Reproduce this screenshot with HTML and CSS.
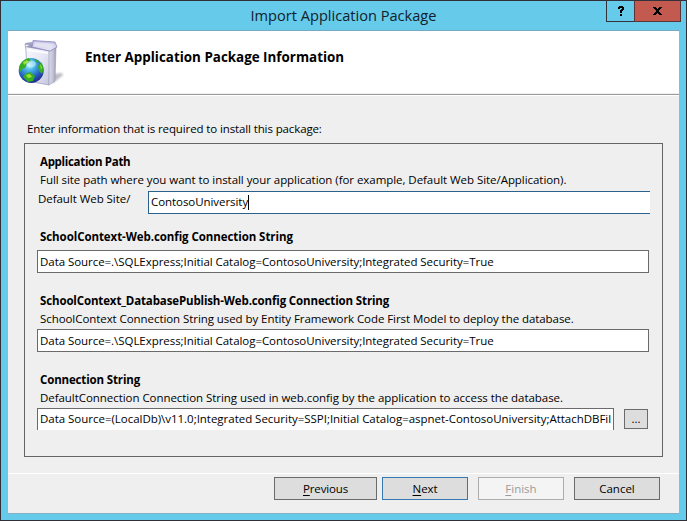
FILE: index.html
```
<!DOCTYPE html>
<html lang="en">
<head>
<meta charset="utf-8">
<title>Import Application Package</title>
<link rel="stylesheet" href="styles.css">
</head>
<body>
<div class="window">
  <div class="titlebar">
    <h1 class="title"><span class="t-title">Import Application Package</span></h1>
    <div class="controls">
      <button class="help" aria-label="Help"><svg width="8" height="11" viewBox="0 0 8 11"><path d="M1 3V1H2V0H6V1H7V4H6V5H5V7H3V4H4V3H5V2H3V3ZM3 8H5V10H3Z"/></svg></button>
      <button class="close" aria-label="Close"><svg width="9" height="8" viewBox="0 0 9 8"><path d="M0 0H3V1H4V2H5V1H6V0H9V1H8V2H7V3H6V5H7V6H8V7H9V8H6V7H5V6H4V7H3V8H0V7H1V6H2V5H3V3H2V2H1V1H0Z"/></svg></button>
    </div>
  </div>
  <div class="client">
    <header class="banner">
      <svg class="package" width="48" height="50" viewBox="0 0 48 50">
        <defs>
          <linearGradient id="front" x1="0" y1="0" x2="1" y2="1"><stop offset="0" stop-color="#f9f9fd"/><stop offset=".5" stop-color="#e7e8f5"/><stop offset="1" stop-color="#c4c5de"/></linearGradient>
          <linearGradient id="side"><stop offset="0" stop-color="#dcdcea"/><stop offset=".6" stop-color="#c0c0d4"/><stop offset="1" stop-color="#9a9ab4"/></linearGradient>
          <linearGradient id="flap" x1="0" y1="0" x2="0" y2="1"><stop offset="0" stop-color="#b9b7df"/><stop offset="1" stop-color="#eeeef8"/></linearGradient>
          <radialGradient id="globe" cx=".42" cy=".28" r=".75"><stop offset="0" stop-color="#b9f2ff"/><stop offset=".3" stop-color="#47b5e8"/><stop offset=".7" stop-color="#2458bd"/><stop offset="1" stop-color="#202681"/></radialGradient>
          <filter id="soft"><feGaussianBlur stdDeviation="1.2"/></filter>
        </defs>
        <path d="M34 46L45 37L44 35L36 36Z" fill="#8d8d98" opacity=".6" filter="url(#soft)"/>
        <path d="M7 5L14 4L15 9L8 12Z" fill="#a5a3c6"/>
        <path d="M7 6L8 12L9 43L31 47L32 13Z" fill="url(#front)" stroke="#a3a3c3" stroke-width=".8"/>
        <path d="M31 13L38 9L37 43L31 47Z" fill="url(#side)" stroke="#9898b4" stroke-width=".6"/>
        <path d="M7 9L31 13L39 9L15 6Z" fill="#9998bd"/>
        <path d="M15 2.5L37 4L39 9L32 13L14 9Z" fill="url(#flap)" stroke="#8b88bb" stroke-width=".8"/>
        <path d="M17 4L36 6L33 10L16 8Z" fill="#e8e7f6" opacity=".75"/>
        <path d="M9 12L30 15" stroke="#fff" stroke-width="1.5"/>
        <circle cx="13.2" cy="32.5" r="12.5" fill="url(#globe)"/>
        <path d="M3 25Q6 21 11 20L13 23L9 26L7 30L4 31L2 34Q0 29 3 25ZM23 24Q27 30 24 36L21 33L20 28ZM7 36L12 34L17 38L15 43L10 44L5 39ZM16 21L21 23L19 25Z" fill="#35ae24"/>
        <path d="M5 24L9 22L10 24L6 27ZM22 26L24 29L23 32ZM8 37L12 36L14 39L10 40Z" fill="#a0df38"/>
        <ellipse cx="13" cy="26" rx="5" ry="3.5" fill="#e1fbff" opacity=".5"/>
      </svg>
      <h2 class="heading">Enter Application Package Information</h2>
    </header>
    <p class="intro"><span class="t-intro">Enter information that is required to install this package:</span></p>
    <main class="group">
      <section class="field first">
        <h3><span class="t-app">Application Path</span></h3>
        <p><span class="t-full">Full site path where you want to install your application (for example, Default Web Site/Application).</span></p>
        <div class="path-row">
          <label><span class="t-site">Default Web Site/</span></label>
          <div class="input active"><span class="t-name">ContosoUniversity</span><i class="caret"></i></div>
        </div>
      </section>
      <section class="field second">
        <h3><span class="t-school">SchoolContext-Web.config Connection String</span></h3>
        <div class="input gap"><span class="t-data">Data Source=.\SQLExpress;Initial Catalog=ContosoUniversity;Integrated Security=True</span></div>
      </section>
      <section class="field third">
        <h3><span class="t-publish">SchoolContext_DatabasePublish-Web.config Connection String</span></h3>
        <p><span class="t-entity">SchoolContext Connection String used by Entity Framework Code First Model to deploy the database.</span></p>
        <div class="input"><span class="t-data">Data Source=.\SQLExpress;Initial Catalog=ContosoUniversity;Integrated Security=True</span></div>
      </section>
      <section class="field fourth">
        <h3><span class="t-conn">Connection String</span></h3>
        <p><span class="t-default">DefaultConnection Connection String used in web.config by the application to access the database.</span></p>
        <div class="browse-row">
          <div class="input cut"><span class="t-local">Data Source=(LocalDb)\v11.0;Integrated Security=SSPI;Initial Catalog=aspnet-ContosoUniversity;AttachDBFil</span></div>
          <button class="browse">...</button>
        </div>
      </section>
    </main>
    <footer class="actions">
      <button class="btn previous"><span class="t-prev"><u>P</u>revious</span></button>
      <button class="btn next"><span class="t-next"><u>N</u>ext</span></button>
      <button class="btn finish" disabled><u>F</u>inish</button>
      <button class="btn cancel">Cancel</button>
    </footer>
  </div>
</div>
</body>
</html>
```
FILE: styles.css
```
* { box-sizing: border-box; }
body { margin: 0; font: 11.5px/18px "Open Sans", "Noto Sans", sans-serif; color: #000; }
h1, h2, h3, p { margin: 0; font-size: inherit; white-space: nowrap; }
h3 { font-weight: 700; }
button { font: inherit; color: inherit; padding: 0; margin: 0; }

.window { width: 687px; height: 521px; border: 1px solid #302f37; background: #66caea; padding: 0 7px 6px; }
.titlebar { height: 30px; display: flex; border-bottom: 1px solid #77a9c2; position: relative; }
.title { flex: 1; text-align: center; font-size: 14.6px; font-weight: 400; line-height: 29px; color: #10222a; }
.controls { position: absolute; top: -1px; right: -2px; display: flex; }
.controls button { height: 22px; border: 1px solid #33323a; display: flex; align-items: center; justify-content: center; }
.help { width: 29px; background: #66caea; }
.close { width: 47px; margin-left: -1px; background: #c35a50; }
.controls .close { border-color: #5b3438; border-top-color: #33323a; }

.client { height: 483px; background: #efefef; border-bottom: 1px solid #82b1c3; }
.banner { height: 65px; display: flex; background: #fff; border-bottom: 1px solid #fff; box-shadow: inset 0 -1px #9c9c9c, inset 0 -2px #f0f0f0; }
.package { margin: 7px 0 0 10px; }
.heading { margin: 15px 0 0 19px; font-size: 13.4px; line-height: 22px; }
.intro { margin: 23px 0 0 19px; height: 18px; line-height: 20px; }

.group { margin: 6px 16px 0; height: 314px; border: 1px solid #646464; padding: 8px 13px 0 12px; }
.field h3, .field p { height: 18px; line-height: 20px; padding-left: 3px; }
.second { margin-top: 13px; }
.third, .fourth { margin-top: 18px; }
.input { height: 23px; margin-top: 2px; border: 1px solid #6b6b6b; background: #fff; line-height: 21px; padding-left: 2px; white-space: nowrap; overflow: hidden; }
.input.gap { margin-top: 5px; }
.path-row { display: flex; margin-top: 3px; }
.path-row label { width: 111px; line-height: 20px; margin-top: -2px; padding-left: 1px; }
.path-row .input { flex: 1; display: flex; margin: 0 -1px 0 0; line-height: 20px; border-color: #2b618d; border-right: 0; }
.caret { width: 1px; height: 15px; margin-top: 3px; background: #000; }
.browse-row { display: flex; gap: 10px; margin-top: 2px; }
.cut { width: 577px; height: 22px; margin: 0; line-height: 20px; border-bottom: 0; }
.browse { width: 24px; height: 20px; margin-top: 1px; border: 1px solid #6b6b6b; background: #ddd; line-height: 16px; }

.actions { margin-top: 16px; padding: 3px 19px 0 0; border-top: 1px solid #fff; display: flex; justify-content: flex-end; }
.btn { width: 86px; height: 23px; border: 1px solid #6b6b6b; background: #ddd; line-height: 21px; }
.previous { width: 103px; }
.next { margin: 0 10px 0 5px; border-color: #3479b4; }
.finish { margin-right: 10px; border-color: #adadad; background: #f4f4f4; color: #9b9b9b; }
u { text-underline-offset: 2px; }

/* Tracking per label */
.t-intro { letter-spacing: -.119px; }
.t-app { letter-spacing: -.305px; }
.t-full, .t-default, .t-data, .t-site { letter-spacing: -.051px; }
.t-name { letter-spacing: -.06px; }
.t-school { letter-spacing: -.07px; }
.t-publish { letter-spacing: -.135px; }
.t-entity { letter-spacing: -.067px; }
.t-conn { letter-spacing: -.15px; }
.t-local { letter-spacing: -.025px; }
.t-prev { letter-spacing: -.15px; }
.t-next { letter-spacing: -.1px; }
```
